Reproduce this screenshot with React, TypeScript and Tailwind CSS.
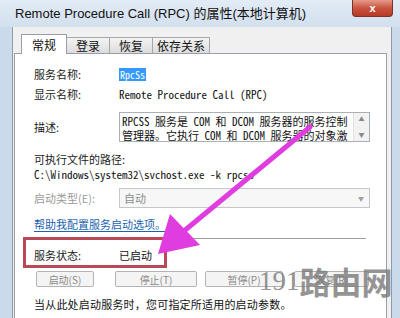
const cjk = { fontFamily: '"Noto Sans CJK SC", "Liberation Sans", sans-serif' };
const mono = { fontFamily: '"Noto Sans Mono CJK SC", "Liberation Mono", "Noto Sans CJK SC", monospace' };

const Row = ({ label, children, className }: { label: string; children?: React.ReactNode; className?: string }) => (
  <div className={`flex items-center ${className || ''}`}>
    <div className="w-[85px] shrink-0 text-[11px] text-[#1a1a1a]">{label}</div>
    {children}
  </div>
);

const Btn = ({ label, className }: { label: string; className: string }) => (
  <div
    className={`h-[16px] flex items-center justify-center rounded-[2px] border border-[#b3b3b3] bg-[#f4f4f4] text-[10px] text-[#8a8a8a] ${className}`}
  >
    {label}
  </div>
);

export default function App() {
  return (
    <div className="relative w-[400px] h-[318px] overflow-hidden bg-[#cbdaea] flex flex-col" style={cjk}>
      {/* title bar */}
      <div className="h-[27px] shrink-0 relative flex items-center pl-[15px] bg-gradient-to-b from-[#e3ecf6] to-[#d2dfed]">
        <span className="text-[13px] text-[#111]" style={{ fontFamily: '"Liberation Sans", "Noto Sans CJK SC", sans-serif' }}>
          Remote Procedure Call (RPC) 的属性(本地计算机)
        </span>
        <div className="absolute left-[352px] top-0 w-[41px] h-[17px] rounded-b-[4px] border border-t-0 border-[#7d3128] bg-gradient-to-b from-[#e59a88] via-[#c9543f] to-[#b73a26] flex items-center justify-center">
          <span className="text-white text-[11px] font-bold leading-none" style={{ fontFamily: '"Liberation Sans", sans-serif' }}>x</span>
        </div>
      </div>

      {/* client area */}
      <div className="flex-1 ml-[12px] mr-[8px] bg-[#f0f0f0] border-l border-[#8e9aa8] flex flex-col">
        {/* tabs */}
        <div className="h-[26px] shrink-0 flex items-end pl-[8px]">
          <div className="relative z-10 -mb-px h-[20px] w-[46px] flex items-center justify-center bg-white border border-b-0 border-[#9a9ea6] text-[12px] text-[#111]">
            常规
          </div>
          <div className="h-[16px] w-[43px] flex items-center justify-center border border-l-0 border-b-0 border-[#a3a7ae] bg-gradient-to-b from-[#f4f4f4] to-[#dcdcdc] text-[12px] text-[#111]">
            登录
          </div>
          <div className="h-[16px] w-[43px] flex items-center justify-center border border-l-0 border-b-0 border-[#a3a7ae] bg-gradient-to-b from-[#f4f4f4] to-[#dcdcdc] text-[12px] text-[#111]">
            恢复
          </div>
          <div className="h-[16px] w-[57px] flex items-center justify-center border border-l-0 border-b-0 border-[#a3a7ae] bg-gradient-to-b from-[#f4f4f4] to-[#dcdcdc] text-[12px] text-[#111]">
            依存关系
          </div>
        </div>

        {/* panel */}
        <div className="flex-1 ml-px w-[373px] bg-white border border-b-0 border-[#9a9ea6] pl-[19px] pt-[10px] flex flex-col">
          <Row label="服务名称:" className="h-[20px]">
            <span className="bg-[#3399ff] text-white text-[10px] px-[1px] leading-[13px]" style={mono}>RpcSs</span>
          </Row>
          <Row label="显示名称:" className="h-[20px]">
            <span className="text-[11px] text-[#111]" style={mono}>Remote Procedure Call (RPC)</span>
          </Row>
          <div className="flex mt-[8px]">
            <div className="w-[85px] shrink-0 h-[30px] flex items-center text-[11px] text-[#1a1a1a]">描述:</div>
            <div className="w-[251px] h-[30px] border border-[#aab0b8] flex">
              <div className="flex-1 pl-[2px] pt-px text-[11px] leading-[14px] text-[#111] overflow-hidden whitespace-nowrap" style={mono}>
                <div>RPCSS 服务是 COM 和 DCOM 服务器的服务控制</div>
                <div>管理器。它执行 COM 和 DCOM 服务器的对象激</div>
              </div>
              <div className="w-[16px] bg-[#f2f2f2] border-l border-[#e2e2e2] flex flex-col items-center justify-between py-[3px] text-[6px] text-[#888] leading-none">
                <span>▲</span>
                <span>▼</span>
              </div>
            </div>
          </div>
          <div className="mt-[10px] h-[15px] flex items-center text-[11px] text-[#1a1a1a]">可执行文件的路径:</div>
          <div className="h-[14px] flex items-center text-[11px] text-[#111]" style={mono}>
            C:\Windows\system32\svchost.exe -k rpcss
          </div>
          <Row label="" className="mt-[7px] h-[20px]">
            <div className="w-[251px] h-[20px] border border-[#c3c6cb] bg-[#f7f7f7] flex items-center justify-between pl-[4px] pr-[5px]">
              <span className="text-[11px] text-[#8d8d8d]">自动</span>
              <span className="text-[6px] text-[#a0a0a0]">▼</span>
            </div>
          </Row>
          <div className="-mt-[20px] h-[20px] flex items-center text-[11px] text-[#9a9a9a] w-[85px]">启动类型(E):</div>
          <div className="mt-[8px] h-[16px] flex items-center">
            <span className="text-[11px] text-[#1c62b0] underline underline-offset-2">帮助我配置服务启动选项。</span>
          </div>
          <div className="mt-[6px] w-[332px] h-px bg-[#a0a0a0]" />
          <Row label="服务状态:" className="mt-[6px] h-[20px]">
            <span className="text-[11px] text-[#111]">已启动</span>
          </Row>
          <div className="mt-[6px] flex items-center">
            <Btn label="启动(S)" className="ml-[2px] w-[58px]" />
            <Btn label="停止(T)" className="ml-[21px] w-[82px]" />
            <Btn label="暂停(P)" className="ml-[8px] w-[78px]" />
            <Btn label="恢复(R)" className="ml-[11px] w-[75px]" />
          </div>
          <div className="mt-[9px] h-[16px] flex items-center text-[11px] tracking-[0.2px] text-[#111]">
            当从此处启动服务时，您可指定所适用的启动参数。
          </div>
        </div>
      </div>
      <div className="absolute right-[8px] top-[27px] bottom-0 w-px bg-[#8e9aa8]" />

      {/* annotations */}
      <div className="absolute left-[23px] top-[237px] w-[144px] h-[31px] border-[3px] border-[#b84a56]" />
      <svg className="absolute inset-0 pointer-events-none" width="400" height="318" viewBox="0 0 400 318">
        <line x1="310" y1="127" x2="184" y2="231" stroke="#e03de0" strokeWidth="5" strokeLinecap="round" />
        <polygon points="158,254 170,214 200,245" fill="#e03de0" />
      </svg>
      <div className="absolute left-[259px] top-[265px] flex items-end text-[#7a7a7a] opacity-80 leading-none">
        <span className="text-[27px] pb-[1px]" style={{ fontFamily: '"Liberation Serif", serif' }}>191</span>
        <span className="text-[31px] font-bold" style={cjk}>路由网</span>
      </div>
    </div>
  );
}
